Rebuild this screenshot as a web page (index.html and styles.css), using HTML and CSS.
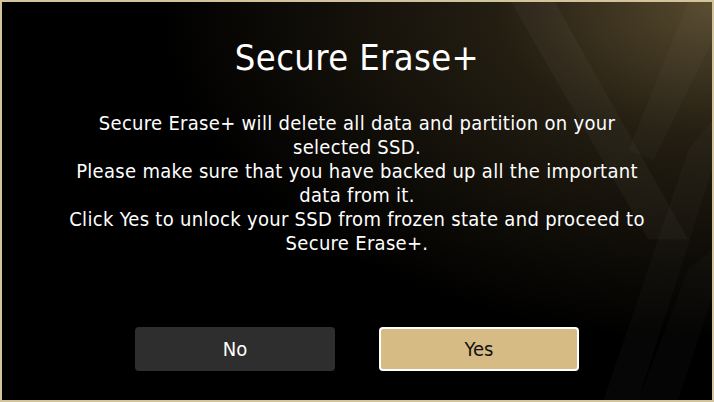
FILE: index.html
```html
<!DOCTYPE html>
<html>
<head>
<meta charset="utf-8">
<link rel="stylesheet" href="styles.css">
</head>
<body>
<div class="dialog">
  <svg class="deco" viewBox="0 0 714 402" preserveAspectRatio="none" aria-hidden="true">
    <polygon points="512,0 556,0 690,240 650,240" fill="#ffffff" opacity="0.03"/>
    <polygon points="690,0 714,0 714,40 655,160 630,150" fill="#ffffff" opacity="0.025"/>
    <polygon points="690,150 714,120 714,170 640,402 605,402" fill="#ffffff" opacity="0.025"/>
    <polygon points="690,270 714,250 714,300 680,402 640,402" fill="#ffffff" opacity="0.02"/>
  </svg>
  <div class="content">
    <h1 class="title">Secure Erase+</h1>
    <p class="message">Secure Erase+ will delete all data and partition on your<br>selected SSD.<br>Please make sure that you have backed up all the important<br>data from it.<br>Click Yes to unlock your SSD from frozen state and proceed to<br>Secure Erase+.</p>
    <div class="actions">
      <button class="btn btn-no">No</button>
      <button class="btn btn-yes">Yes</button>
    </div>
  </div>
</div>
</body>
</html>
```
FILE: styles.css
```css
html, body {
  margin: 0;
  padding: 0;
  width: 714px;
  height: 402px;
  background: #000;
  overflow: hidden;
}
.dialog {
  position: relative;
  box-sizing: border-box;
  width: 714px;
  height: 402px;
  border: 2px solid #d3c49b;
  background:
    radial-gradient(ellipse 560px 340px at 714px 0px, rgba(92,78,48,0.95) 0%, rgba(50,42,25,0.7) 40%, rgba(0,0,0,0) 100%),
    #000;
  font-family: "DejaVu Sans Condensed", "DejaVu Sans", sans-serif;
  color: #fff;
  overflow: hidden;
}
.deco {
  position: absolute;
  left: 0;
  top: 0;
  width: 100%;
  height: 100%;
}
.content {
  position: relative;
  display: flex;
  flex-direction: column;
  align-items: center;
  padding-top: 33px;
}
.title {
  margin: 0;
  font-weight: normal;
  font-size: 36px;
  line-height: 46px;
  letter-spacing: 0.4px;
}
.message {
  margin: 30px 0 0;
  font-size: 20px;
  line-height: 24px;
  letter-spacing: 0.3px;
  text-align: center;
  white-space: nowrap;
}
.actions {
  display: flex;
  gap: 44px;
  margin-top: 72px;
}
.btn {
  box-sizing: border-box;
  width: 200px;
  height: 44px;
  border-radius: 4px;
  font-family: "DejaVu Sans Condensed", "DejaVu Sans", sans-serif;
  font-size: 20px;
  padding: 0;
  cursor: pointer;
}
.btn-no {
  background: #2e2e2e;
  border: none;
  color: #fff;
}
.btn-yes {
  background: #d7bb84;
  border: 2px solid #fff;
  color: #111;
}
```
